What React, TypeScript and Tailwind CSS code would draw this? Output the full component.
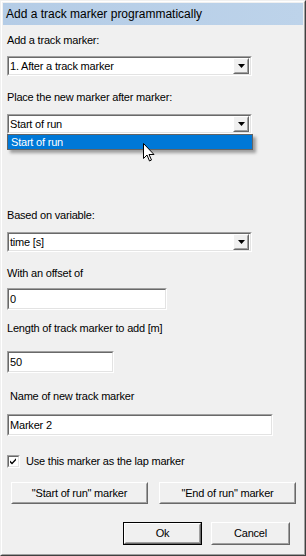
import type { ReactNode } from "react";

const font = "font-['Liberation_Sans',Arial,sans-serif]";

function Sunken({ className, children }: { className?: string; children?: ReactNode }) {
    return (
        <div className={`border border-t-[#a0a0a0] border-l-[#a0a0a0] border-r-white border-b-white ${className ?? ""}`}>
            <div className="flex h-full items-center border border-t-[#696969] border-l-[#696969] border-r-[#e3e3e3] border-b-[#e3e3e3] bg-white">
                {children}
            </div>
        </div>
    );
}

function Raised({ className, children }: { className?: string; children?: ReactNode }) {
    return (
        <div className={`border border-t-white border-l-white border-r-[#696969] border-b-[#696969] ${className ?? ""}`}>
            <div className="flex h-full items-center justify-center border border-t-[#f0f0f0] border-l-[#f0f0f0] border-r-[#a0a0a0] border-b-[#a0a0a0] bg-[#f0f0f0]">
                {children}
            </div>
        </div>
    );
}

function Label({ children, className }: { children: ReactNode; className?: string }) {
    return <div className={`h-[13px] text-[11px] leading-[13px] tracking-[-0.2px] text-black ${className ?? ""}`}>{children}</div>;
}

function Combo({ value, className }: { value: string; className?: string }) {
    return (
        <Sunken className={`h-[20px] w-[245px] ${className ?? ""}`}>
            <span className="flex-1 pl-[1px] text-[11px] leading-[13px] tracking-[-0.2px]">{value}</span>
            <Raised className="mr-[1px] h-[16px] w-[16px]">
                <svg width="7" height="4" viewBox="0 0 7 4">
                    <path d="M0 0h7L3.5 4z" fill="#000" />
                </svg>
            </Raised>
        </Sunken>
    );
}

function Field({ value, className }: { value: string; className?: string }) {
    return (
        <Sunken className={`h-[22px] ${className ?? ""}`}>
            <span className="pl-[1px] text-[11px] leading-[13px] tracking-[-0.2px]">{value}</span>
        </Sunken>
    );
}

function Button({ children, primary, className }: { children: ReactNode; primary?: boolean; className?: string }) {
    const inner = (
        <Raised className="h-full w-full">
            <span className="text-[11px] leading-[13px] tracking-[-0.2px]">{children}</span>
        </Raised>
    );
    if (primary) return <div className={`border border-black ${className ?? ""}`}>{inner}</div>;
    return <div className={className}>{inner}</div>;
}

export default function App() {
    return (
        <div className={`${font} h-[556px] w-[306px] border border-t-[#f0f0f0] border-l-[#f0f0f0] border-r-[#404040] border-b-[#404040] text-black`}>
            <div className="flex h-full flex-col border border-t-white border-l-white border-r-[#a0a0a0] border-b-[#a0a0a0] bg-[#f0f0f0] p-[1px]">
                <div className="flex h-[22px] items-center bg-gradient-to-r from-[#b4cce6] to-[#bdd3ea] pl-[3px] text-[12px]">
                    Add a track marker programmatically
                </div>

                <div className="relative flex flex-col pl-[4px]">
                    <Label className="mt-[9px]">Add a track marker:</Label>
                    <Combo value="1. After a track marker" className="mt-[9px]" />

                    <Label className="mt-[15px]">Place the new marker after marker:</Label>
                    <Combo value="Start of run" className="mt-[10px]" />

                    <Label className="mt-[75px]">Based on variable:</Label>
                    <Combo value="time [s]" className="mt-[10px]" />

                    <Label className="mt-[15px]">With an offset of</Label>
                    <Field value="0" className="mt-[8px] w-[160px]" />

                    <Label className="mt-[12px]">Length of track marker to add [m]</Label>
                    <Field value="50" className="mt-[16px] w-[107px]" />

                    <Label className="mt-[17px] pl-[3px]">Name of new track marker</Label>
                    <Field value="Marker 2" className="mt-[11px] w-[266px]" />

                    <div className="mt-[19px] flex h-[13px] items-center gap-[6px]">
                        <Sunken className="h-[13px] w-[13px]">
                            <svg width="9" height="9" viewBox="0 0 9 9" className="mx-auto">
                                <path d="M1 3.5l2 2 4-4.2v2L3 7.5l-2-2z" fill="#000" />
                            </svg>
                        </Sunken>
                        <span className="text-[11px] leading-[13px] tracking-[-0.2px]">Use this marker as the lap marker</span>
                    </div>

                    <div className="mt-[14px] flex gap-[11px] pl-[4px]">
                        <Button className="h-[22px] w-[137px]">"Start of run" marker</Button>
                        <Button className="h-[22px] w-[137px]">"End of run" marker</Button>
                    </div>

                    <div className="mt-[18px] flex gap-[9px] pl-[116px]">
                        <Button primary className="h-[23px] w-[79px]">Ok</Button>
                        <Button className="h-[23px] w-[79px]">Cancel</Button>
                    </div>

                    {/* open dropdown list of the second combo */}
                    <div className="absolute left-[4px] top-[109px] flex h-[16px] w-[246px] items-center border border-[#646464] bg-[#0078d7] pl-[3px] text-[11px] leading-[13px] tracking-[-0.2px] text-white shadow-[3px_3px_3px_rgba(0,0,0,0.35)]">
                        Start of run
                    </div>

                    {/* mouse pointer */}
                    <svg className="absolute left-[140px] top-[118px]" width="12" height="19" viewBox="0 0 12 19">
                        <path d="M0.5 0.5v15l3.5-3.5 2.5 6 2-1-2.5-5.5h5z" fill="#fff" stroke="#000" strokeWidth="1" strokeLinejoin="miter" />
                    </svg>
                </div>
            </div>
        </div>
    );
}
